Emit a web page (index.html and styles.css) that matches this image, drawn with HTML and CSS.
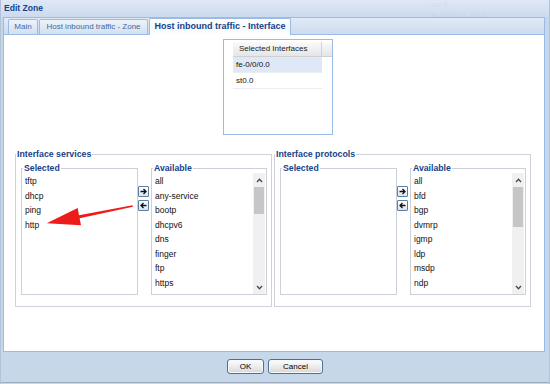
FILE: index.html
```html
<!DOCTYPE html>
<html>
<head>
<meta charset="utf-8">
<title>Edit Zone</title>
<link rel="stylesheet" href="styles.css">
</head>
<body>
<div class="window">
  <div class="titlebar">Edit Zone</div>
  <div class="ghost ghost-1">vsr.0</div>
  <div class="ghost ghost-2">fe-0/0/0.0, st0.0</div>
  <div class="panel">
    <div class="tabstrip">
      <div class="tab tab-main">Main</div>
      <div class="tab tab-zone">Host inbound traffic - Zone</div>
      <div class="tab tab-active">Host inbound traffic - Interface</div>
    </div>
    <div class="content">
      <div class="iface-box">
        <div class="grid">
          <div class="grid-head"><div class="grid-col">Selected Interfaces</div><div class="grid-rest"></div></div>
          <div class="grid-row grid-row-selected">fe-0/0/0.0</div>
          <div class="grid-row">st0.0</div>
        </div>
      </div>

      <div class="groups">
        <fieldset class="group">
          <legend class="group-legend">Interface services</legend>
          <div class="group-body">
            <fieldset class="list-set list-sel">
              <legend class="list-legend">Selected</legend>
              <ul class="list">
                <li>tftp</li><li>dhcp</li><li>ping</li><li>http</li>
              </ul>
            </fieldset>
            <div class="movers">
              <div class="mover"><svg viewBox="0 0 9 9" width="9" height="9"><path d="M1.5 4.5h5.5M4.5 2l2.5 2.5L4.5 7" fill="none" stroke="#111" stroke-width="1.3"/></svg></div>
              <div class="mover"><svg viewBox="0 0 9 9" width="9" height="9"><path d="M7.5 4.5H2M4.5 2L2 4.5 4.5 7" fill="none" stroke="#111" stroke-width="1.3"/></svg></div>
            </div>
            <fieldset class="list-set list-avail">
              <legend class="list-legend">Available</legend>
              <div class="listbox">
                <ul class="list">
                  <li>all</li><li>any-service</li><li>bootp</li><li>dhcpv6</li><li>dns</li><li>finger</li><li>ftp</li><li>https</li>
                </ul>
                <div class="scrollbar">
                  <div class="sb-btn"><svg viewBox="0 0 7 5" width="7" height="5"><polyline points="1,4 3.5,1.3 6,4" fill="none" stroke="#4a4a4a" stroke-width="1.3"/></svg></div>
                  <div class="sb-thumb thumb-short"></div>
                  <div class="sb-btn sb-down"><svg viewBox="0 0 7 5" width="7" height="5"><polyline points="1,1 3.5,3.7 6,1" fill="none" stroke="#4a4a4a" stroke-width="1.3"/></svg></div>
                </div>
              </div>
            </fieldset>
          </div>
        </fieldset>

        <fieldset class="group">
          <legend class="group-legend">Interface protocols</legend>
          <div class="group-body">
            <fieldset class="list-set list-sel">
              <legend class="list-legend">Selected</legend>
              <ul class="list"></ul>
            </fieldset>
            <div class="movers">
              <div class="mover"><svg viewBox="0 0 9 9" width="9" height="9"><path d="M1.5 4.5h5.5M4.5 2l2.5 2.5L4.5 7" fill="none" stroke="#111" stroke-width="1.3"/></svg></div>
              <div class="mover"><svg viewBox="0 0 9 9" width="9" height="9"><path d="M7.5 4.5H2M4.5 2L2 4.5 4.5 7" fill="none" stroke="#111" stroke-width="1.3"/></svg></div>
            </div>
            <fieldset class="list-set list-avail">
              <legend class="list-legend">Available</legend>
              <div class="listbox">
                <ul class="list">
                  <li>all</li><li>bfd</li><li>bgp</li><li>dvmrp</li><li>igmp</li><li>ldp</li><li>msdp</li><li>ndp</li>
                </ul>
                <div class="scrollbar">
                  <div class="sb-btn"><svg viewBox="0 0 7 5" width="7" height="5"><polyline points="1,4 3.5,1.3 6,4" fill="none" stroke="#4a4a4a" stroke-width="1.3"/></svg></div>
                  <div class="sb-thumb thumb-long"></div>
                  <div class="sb-btn sb-down"><svg viewBox="0 0 7 5" width="7" height="5"><polyline points="1,1 3.5,3.7 6,1" fill="none" stroke="#4a4a4a" stroke-width="1.3"/></svg></div>
                </div>
              </div>
            </fieldset>
          </div>
        </fieldset>
      </div>

      <svg class="red-arrow" viewBox="0 0 92 26" width="92" height="26">
        <polygon points="2.7,20.3 33.7,5 35,12.2 88.5,2.2 88.9,3.8 35.6,15.2 37,22.3" fill="#ee1b1b"/>
      </svg>
    </div>
  </div>
  <div class="footer">
    <button class="btn btn-ok">OK</button>
    <button class="btn btn-cancel">Cancel</button>
  </div>
</div>
</body>
</html>
```

FILE: styles.css
```css
* { box-sizing: border-box; }
html, body { margin: 0; padding: 0; }
body {
  width: 550px;
  height: 384px;
  overflow: hidden;
  font-family: "Liberation Sans", Arial, sans-serif;
  font-size: 8px;
  color: #000;
  background: #c7d7ea;
}
.window {
  position: relative;
  width: 550px;
  height: 384px;
  display: flex;
  flex-direction: column;
  background: #c7d7ea;
  border-left: 1px solid #b3c3d7;
  border-right: 1px solid #b3c3d7;
  padding-bottom: 1px;
}
.titlebar {
  height: 17px;
  flex: none;
  padding: 3px 0 0 3px;
  font-weight: bold;
  font-size: 8.6px;
  line-height: 11px;
  color: #15428b;
  background: linear-gradient(#dfe9f5, #ccdaee);
}
.ghost {
  position: absolute;
  left: 430px;
  font-size: 8px;
  line-height: 9px;
  color: rgba(110, 130, 160, 0.12);
}
.ghost-1 { top: 0; }
.ghost-2 { top: 11px; }

.panel {
  flex: 1;
  margin: 0 4px 0 2px;
  border: 1px solid #99bbe8;
  display: flex;
  flex-direction: column;
  background: #fff;
}
.tabstrip {
  height: 17px;
  flex: none;
  display: flex;
  align-items: flex-end;
  gap: 1px;
  padding-left: 4px;
  background: linear-gradient(#e1ebf7, #cddbef);
  border-bottom: 1px solid #99bbe8;
}
.tab {
  height: 15px;
  border: 1px solid #99bbe8;
  border-bottom: none;
  border-radius: 2px 2px 0 0;
  text-align: center;
  line-height: 13px;
  color: #416aa3;
  font-size: 8px;
  background: linear-gradient(#edf3fa, #d3e0f1);
}
.tab-main { width: 30px; }
.tab-zone { width: 109px; }
.tab-active {
  width: 142px;
  height: 17px;
  margin-bottom: -1px;
  position: relative;
  font-weight: bold;
  font-size: 9px;
  line-height: 15px;
  color: #15428b;
  background: linear-gradient(#ffffff, #f4f8fc 60%, #ffffff);
}
.content {
  flex: 1;
  position: relative;
}

.iface-box {
  margin: 4px 0 0 219px;
  width: 110px;
  height: 96px;
  border: 1px solid #99bbe8;
  padding: 2px 0 0 9px;
}
.grid-head {
  display: flex;
  height: 15px;
  border-bottom: 1px solid #d0d0d0;
  background: linear-gradient(#fafafa, #e4e5e7);
}
.grid-col {
  width: 89px;
  border-right: 1px solid #d3d3d3;
  padding-left: 6px;
  line-height: 14px;
  color: #222;
}
.grid-rest { flex: 1; }
.grid-row {
  width: 89px;
  height: 16px;
  border-bottom: 1px solid #ededed;
  padding-left: 3px;
  line-height: 15px;
  color: #111;
}
.grid-row-selected { background: #dfe8f6; }

.groups {
  display: flex;
  gap: 2px;
  margin: 14px 0 0 11px;
}
.group {
  margin: 0;
  width: 257px;
  min-width: 0;
  padding: 0 4px 11px 5px;
  border: 1px solid #cfd2da;
}
.group-legend {
  margin-left: -5px;
  padding: 0 1px;
  font-weight: bold;
  font-size: 8.8px;
  line-height: 10px;
  color: #15428b;
}
.group-body {
  display: flex;
  padding-top: 4px;
}
.list-set {
  margin: 0;
  padding: 0;
  min-width: 0;
  height: 132px;
  border: 1px solid #cdd0d8;
}
.list-sel { width: 117px; }
.list-avail { width: 116px; }
.list-legend {
  margin-left: 1px;
  padding: 0 1px;
  font-weight: bold;
  font-size: 8.7px;
  line-height: 10px;
  color: #15428b;
}
.list {
  margin: 0;
  padding: 1px 0 0 3px;
  list-style: none;
  font-size: 8.5px;
  line-height: 14.5px;
  color: #111;
}
.movers {
  width: 11px;
  margin: 23px 2px 0 0;
}
.mover {
  width: 11px;
  height: 11px;
  margin-bottom: 3px;
  border: 1px solid #5d7ea3;
  border-radius: 1px;
  background: linear-gradient(#ffffff, #dbe4ee);
  display: flex;
  align-items: center;
  justify-content: center;
}
.mover svg { display: block; }
.listbox {
  display: flex;
  height: 121px;
}
.listbox .list { flex: 1; }
.scrollbar {
  width: 12px;
  margin-right: 1px;
  background: #f0f0f0;
  display: flex;
  flex-direction: column;
}
.sb-btn {
  height: 14px;
  display: flex;
  align-items: center;
  justify-content: center;
}
.sb-btn svg { display: block; }
.sb-down { margin-top: auto; }
.sb-thumb {
  margin: 0 1px;
  background: #c6c6c6;
}
.thumb-short { height: 27px; }
.thumb-long { height: 40px; }

.red-arrow {
  position: absolute;
  left: 40px;
  top: 168px;
}

.footer {
  height: 31px;
  flex: none;
  display: flex;
  justify-content: center;
  gap: 4px;
  padding-top: 7px;
  border-bottom: 1px solid #9dabbb;
  background: #c7d7ea;
}
.btn {
  height: 15px;
  padding: 0;
  border: 1px solid #4f6f94;
  border-radius: 3px;
  box-shadow: inset 0 0 0 1px #f6f8fb;
  background: linear-gradient(#fdfdfd, #ececec 50%, #d6d6d6);
  font-family: "Liberation Sans", Arial, sans-serif;
  font-size: 8px;
  line-height: 12px;
  color: #000;
}
.btn-ok { width: 37px; }
.btn-cancel { width: 55px; }
```
